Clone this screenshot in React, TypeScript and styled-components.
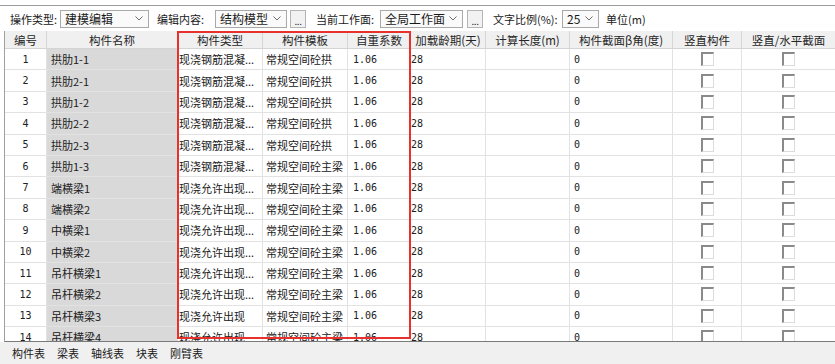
import React from 'react';
import styled, { createGlobalStyle } from 'styled-components';

const GlobalStyle = createGlobalStyle`
  html, body {
    margin: 0;
    padding: 0;
    background: #ffffff;
    overflow: hidden;
  }
  body {
    font-family: 'Noto Sans CJK SC', 'Noto Sans', sans-serif;
    font-size: 11px;
    color: #1a1a1a;
  }
`;

const COLS = [42, 131, 85, 85, 63, 75, 84, 103, 69, 94];

const Page = styled.div`
  width: 835px;
  height: 364px;
  display: flex;
  flex-direction: column;
  padding-top: 5px;
  box-sizing: border-box;
`;

const Toolbar = styled.div`
  height: 25px;
  border-top: 1px solid #9c9c9c;
  display: flex;
  align-items: center;
  padding-left: 10px;
  background: #ffffff;
  white-space: nowrap;
`;

const Label = styled.span<{ $w: number }>`
  flex: 0 0 ${(p) => p.$w}px;
  line-height: 18px;
  color: #202020;
`;

const Combo = styled.div<{ $w: number; $after?: number }>`
  flex: 0 0 ${(p) => p.$w}px;
  height: 18px;
  box-sizing: border-box;
  border: 1px solid #a9a9a9;
  background: #fafafa;
  display: flex;
  align-items: center;
  justify-content: space-between;
  padding: 0 5px 0 4px;
  margin-right: ${(p) => p.$after ?? 0}px;
  font-size: 12px;
`;

const DotsButton = styled.div<{ $before: number }>`
  flex: 0 0 16px;
  height: 18px;
  box-sizing: border-box;
  border: 1px solid #b4b4b4;
  background: #f2f2f2;
  display: flex;
  align-items: flex-end;
  justify-content: center;
  font-size: 10px;
  line-height: 12px;
  margin: 0 10px 0 ${(p) => p.$before}px;
  letter-spacing: -0.5px;
`;

const Chevron = () => (
  <svg width="8" height="5" viewBox="0 0 8 5">
    <polyline points="0.5,0.5 4,4 7.5,0.5" fill="none" stroke="#6e6e6e" strokeWidth="1" />
  </svg>
);

const GridWrap = styled.div`
  position: relative;
  margin-left: 4px;
  height: 310px;
  border-left: 1px solid #a0a0a0;
  border-bottom: 1px solid #7a7a7a;
  overflow: hidden;
`;

const HeaderRow = styled.div`
  display: flex;
  height: 18px;
  box-sizing: border-box;
  border-bottom: 1px solid #d4d4d4;
  background: #f0f0f0;
`;

const HeadCell = styled.div<{ $w: number }>`
  flex: 0 0 ${(p) => p.$w}px;
  box-sizing: border-box;
  border-right: 1px solid #d6d6d6;
  display: flex;
  align-items: center;
  justify-content: center;
  white-space: nowrap;
  overflow: hidden;
  font-size: 11.5px;
  color: #262626;
`;

const Row = styled.div`
  display: flex;
  height: 21.4px;
  box-sizing: border-box;
  border-bottom: 1px solid #e2e2e2;
`;

const Cell = styled.div<{ $w: number; $align?: 'left' | 'center'; $pad?: number; $shade?: boolean }>`
  flex: 0 0 ${(p) => p.$w}px;
  box-sizing: border-box;
  border-right: 1px solid #e2e2e2;
  display: flex;
  align-items: center;
  justify-content: ${(p) => (p.$align === 'center' ? 'center' : 'flex-start')};
  padding-left: ${(p) => p.$pad ?? 0}px;
  background: ${(p) => (p.$shade ? '#d9d9d9' : '#ffffff')};
  white-space: nowrap;
  overflow: hidden;
  color: #202020;
`;

const Num = styled.span`
  font-family: 'DejaVu Sans Mono', 'Liberation Mono', monospace;
  font-size: 10px;
`;

const Check = styled.span`
  width: 13px;
  height: 14px;
  box-sizing: border-box;
  border-top: 2px solid #8a8a8a;
  border-left: 2px solid #8a8a8a;
  border-right: 1px solid #dcdcdc;
  border-bottom: 1px solid #dcdcdc;
  background: #ffffff;
`;

// annotation frame drawn over the three highlighted columns
const Highlight = styled.div`
  position: absolute;
  left: 172px;
  top: 0;
  width: 234px;
  height: 308px;
  box-sizing: border-box;
  border: 2px solid #e8312d;
  pointer-events: none;
`;

const TabBar = styled.div`
  flex: 1;
  background: #f0f0f0;
  display: flex;
  align-items: center;
  gap: 12px;
  padding-left: 12px;
  font-size: 11px;
  color: #202020;
`;

const headers = [
  '编号',
  '构件名称',
  '构件类型',
  '构件模板',
  '自重系数',
  '加载龄期(天)',
  '计算长度(m)',
  '构件截面β角(度)',
  '竖直构件',
  '竖直/水平截面',
];

const names = [
  '拱肋1-1',
  '拱肋2-1',
  '拱肋1-2',
  '拱肋2-2',
  '拱肋2-3',
  '拱肋1-3',
  '端横梁1',
  '端横梁2',
  '中横梁1',
  '中横梁2',
  '吊杆横梁1',
  '吊杆横梁2',
  '吊杆横梁3',
  '吊杆横梁4',
];

const rows = names.map((name, i) => ({
  id: i + 1,
  name,
  type: i < 6 ? '现浇钢筋混凝...' : i < 12 ? '现浇允许出现...' : '现浇允许出现',
  template: i < 5 ? '常规空间砼拱' : '常规空间砼主梁',
}));

const App: React.FC = () => {
  return (
    <Page>
      <GlobalStyle />
      <Toolbar>
        <Label $w={50}>操作类型:</Label>
        <Combo $w={89} $after={8}>
          <span>建模编辑</span>
          <Chevron />
        </Combo>
        <Label $w={58}>编辑内容:</Label>
        <Combo $w={72}>
          <span>结构模型</span>
          <Chevron />
        </Combo>
        <DotsButton $before={3}>...</DotsButton>
        <Label $w={64}>当前工作面:</Label>
        <Combo $w={83}>
          <span>全局工作面</span>
          <Chevron />
        </Combo>
        <DotsButton $before={4}>...</DotsButton>
        <Label $w={69}>文字比例(%):</Label>
        <Combo $w={37} $after={7}>
          <span>25</span>
          <Chevron />
        </Combo>
        <Label $w={40}>单位(m)</Label>
      </Toolbar>

      <GridWrap>
        <HeaderRow>
          {headers.map((h, i) => (
            <HeadCell key={h} $w={COLS[i]}>
              {h}
            </HeadCell>
          ))}
        </HeaderRow>
        {rows.map((r) => (
          <Row key={r.id}>
            <Cell $w={COLS[0]} $align="center">
              <Num>{r.id}</Num>
            </Cell>
            <Cell $w={COLS[1]} $pad={4} $shade>
              {r.name}
            </Cell>
            <Cell $w={COLS[2]} $pad={1}>
              {r.type}
            </Cell>
            <Cell $w={COLS[3]} $pad={3}>
              {r.template}
            </Cell>
            <Cell $w={COLS[4]} $pad={5}>
              <Num>1.06</Num>
            </Cell>
            <Cell $w={COLS[5]} $pad={0}>
              <Num>28</Num>
            </Cell>
            <Cell $w={COLS[6]} />
            <Cell $w={COLS[7]} $pad={4}>
              <Num>0</Num>
            </Cell>
            <Cell $w={COLS[8]} $align="center">
              <Check />
            </Cell>
            <Cell $w={COLS[9]} $align="center">
              <Check />
            </Cell>
          </Row>
        ))}
        <Highlight />
      </GridWrap>

      <TabBar>
        <span>构件表</span>
        <span>梁表</span>
        <span>轴线表</span>
        <span>块表</span>
        <span>刚臂表</span>
      </TabBar>
    </Page>
  );
};

export default App;
